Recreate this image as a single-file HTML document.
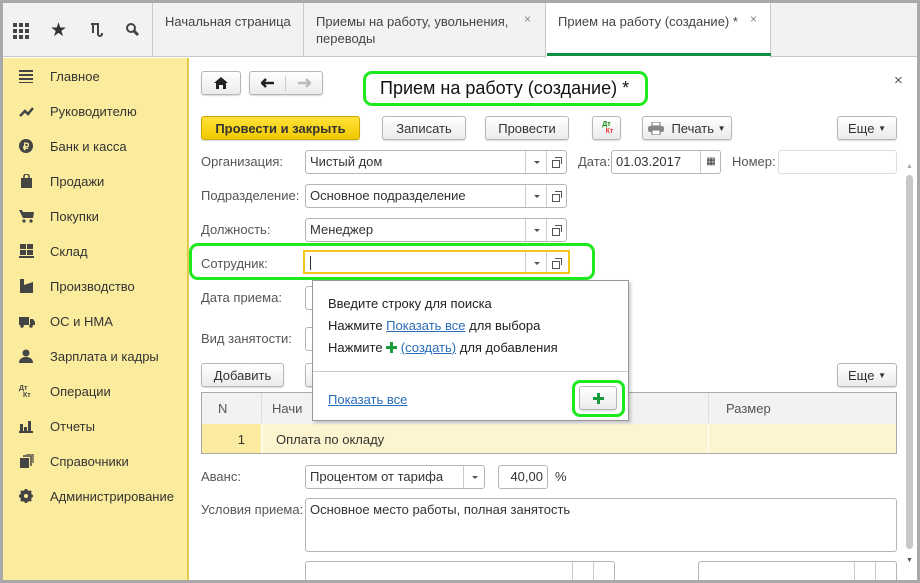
<!DOCTYPE html>
<html><head><meta charset="utf-8"><style>
*{box-sizing:border-box;margin:0;padding:0}
body{width:920px;height:583px;overflow:hidden;background:#a9a9a9;font-family:"Liberation Sans",sans-serif;font-size:13px;color:#333;position:relative}
.a{position:absolute}
.frame{left:3px;top:3px;width:914px;height:577px;background:#fff;overflow:hidden}
.top{left:0;top:0;width:914px;height:54px;background:#f2f2f2;border-bottom:1px solid #c8c8c8}
.tab{top:0;height:54px;border-left:1px solid #c8c8c8;padding:10px 12px;font-size:13px;color:#444;line-height:17px}
.side{left:0;top:55px;width:186px;height:522px;background:#fbec9d;border-right:2px solid #e6c84a}
.mi{left:16px;height:20px;font-size:13px;color:#333;display:flex;align-items:center}
.mi svg{margin-right:15px;flex:none}
.btn{height:24px;border:1px solid #b7b7b7;border-radius:3px;background:linear-gradient(#fff,#ebebeb);font-size:13px;color:#333;display:flex;align-items:center;justify-content:center;box-shadow:0 1px 1px rgba(0,0,0,.15)}
.fld{height:24px;border:1px solid #b5b5b5;border-radius:3px;background:#fff;font-size:13px;color:#333;padding:3px 4px;overflow:hidden}
.lbl{font-size:13px;color:#555}
.dd{position:absolute;top:0;width:21px;height:22px;border-left:1px solid #ccc}
.dd:after{content:"";position:absolute;left:8px;top:10px;border:3px solid transparent;border-top:3px solid #555}
.ob{position:absolute;top:0;width:21px;height:22px;border-left:1px solid #ccc}
.ob:before{content:"";position:absolute;left:5px;top:9px;width:6px;height:6px;border:1px solid #555;background:#fff}
.ob:after{content:"";position:absolute;left:8px;top:6px;width:6px;height:6px;border:1px solid #555;border-left:none;border-bottom:none}
.lnk{color:#2a6dbb;text-decoration:underline}
</style></head><body>
<div class="a frame">
 <div class="a top">
  <svg class="a" style="left:10px;top:20px" width="16" height="16" fill="#444"><rect x="0" y="0" width="4" height="4"/><rect x="6" y="0" width="4" height="4"/><rect x="12" y="0" width="4" height="4"/><rect x="0" y="6" width="4" height="4"/><rect x="6" y="6" width="4" height="4"/><rect x="12" y="6" width="4" height="4"/><rect x="0" y="12" width="4" height="4"/><rect x="6" y="12" width="4" height="4"/><rect x="12" y="12" width="4" height="4"/></svg>
  <div class="a" style="left:47px;top:16px;font-size:19px;color:#333">★</div>
  <svg class="a" style="left:86px;top:19px" width="16" height="16" fill="none" stroke="#444" stroke-width="2"><path d="M2 2h7v10a2 2 0 0 0 4 0v-1"/><path d="M4 2v9"/></svg>
  <svg class="a" style="left:122px;top:19px" width="16" height="16"><circle cx="6" cy="6" r="4" stroke="#444" stroke-width="2" fill="none"/><path d="M9 9l4 4" stroke="#444" stroke-width="3"/></svg>
  <div class="a tab" style="left:149px;width:151px">Начальная страница</div>
  <div class="a tab" style="left:300px;width:242px">Приемы на работу, увольнения,<br>переводы<span class="a" style="left:220px;top:8px;color:#888;font-size:12px">×</span></div>
  <div class="a tab" style="left:542px;width:226px;background:#fff;height:55px;border-right:1px solid #c8c8c8">Прием на работу (создание) *<span class="a" style="left:204px;top:8px;color:#888;font-size:12px">×</span><div class="a" style="left:1px;top:50px;width:224px;height:3px;background:#0f8f3f"></div></div>
 </div>
 <div class="a side">
  <div class="a mi" style="top:8px"><svg width="16" height="14" fill="#444"><rect y="1" width="14" height="2"/><rect y="5" width="14" height="2"/><rect y="9" width="14" height="2"/><rect y="13" width="14" height="1.5"/></svg>Главное</div>
  <div class="a mi" style="top:43px"><svg width="16" height="14" fill="none" stroke="#444" stroke-width="2.5"><path d="M1 12l5-5 3 3 5-6"/></svg>Руководителю</div>
  <div class="a mi" style="top:78px"><svg width="16" height="14"><circle cx="7" cy="7" r="7" fill="#444"/><text x="7" y="11" font-size="10" font-weight="bold" fill="#fbec9d" text-anchor="middle" font-family="Liberation Sans">₽</text></svg>Банк и касса</div>
  <div class="a mi" style="top:113px"><svg width="16" height="14" fill="#444"><path d="M2 4h11v10H2z"/><path d="M5 5V2.5a2.5 2.5 0 0 1 5 0V5" stroke="#444" stroke-width="1.5" fill="none"/></svg>Продажи</div>
  <div class="a mi" style="top:148px"><svg width="16" height="14" fill="#444"><path d="M0 1h3l1 2h11l-1 6H4z"/><circle cx="5" cy="12" r="1.6"/><circle cx="12" cy="12" r="1.6"/></svg>Покупки</div>
  <div class="a mi" style="top:183px"><svg width="16" height="14" fill="#444"><rect x="1" y="0" width="6" height="5"/><rect x="8" y="0" width="6" height="5"/><rect x="1" y="6" width="6" height="5"/><rect x="8" y="6" width="6" height="5"/><rect x="0" y="12" width="15" height="2"/></svg>Склад</div>
  <div class="a mi" style="top:218px"><svg width="16" height="14" fill="#444"><path d="M1 0h4v6l9-3v11H1z"/></svg>Производство</div>
  <div class="a mi" style="top:253px"><svg width="16" height="14" fill="#444"><path d="M0 3h10v8H0zM11 5h3l2 3v3h-5z"/><circle cx="3" cy="12" r="1.8"/><circle cx="12" cy="12" r="1.8"/></svg>ОС и НМА</div>
  <div class="a mi" style="top:288px"><svg width="16" height="14" fill="#444"><circle cx="7" cy="4" r="3.5"/><path d="M0 14c0-4 3-6 7-6s7 2 7 6z"/></svg>Зарплата и кадры</div>
  <div class="a mi" style="top:323px"><svg width="16" height="14" fill="#444" font-family="Liberation Sans" font-weight="bold" font-size="7"><text x="0" y="6">Дт</text><text x="4" y="13">Кт</text></svg>Операции</div>
  <div class="a mi" style="top:358px"><svg width="16" height="14" fill="#444"><rect x="1" y="5" width="3" height="8"/><rect x="5" y="8" width="3" height="5"/><rect x="9" y="2" width="3" height="11"/><rect x="0" y="12" width="14" height="2"/></svg>Отчеты</div>
  <div class="a mi" style="top:393px"><svg width="16" height="14" fill="#444"><rect x="1" y="4" width="9" height="10"/><path d="M4 2h8v10" stroke="#444" stroke-width="1.5" fill="none"/><path d="M7 0h7v9" stroke="#444" stroke-width="1.2" fill="none"/></svg>Справочники</div>
  <div class="a mi" style="top:428px"><svg width="16" height="14"><circle cx="7" cy="7" r="4.5" fill="none" stroke="#444" stroke-width="3"/><g stroke="#444" stroke-width="2.5"><path d="M7 0v14M0 7h14M2 2l10 10M12 2L2 12"/></g><circle cx="7" cy="7" r="2" fill="#fbec9d"/></svg>Администрирование</div>
 </div>
 <!-- content -->
 <div class="a btn" style="left:198px;top:68px;width:40px;height:24px"><svg width="14" height="12" fill="#222"><path d="M7 0l7 6h-2v6H9V8H5v4H2V6H0z"/></svg></div>
 <div class="a btn" style="left:246px;top:68px;width:74px;height:24px;justify-content:flex-start"><span style="width:36px;text-align:center;border-right:1px solid #ccc"><svg width="14" height="10"><path d="M1 5h12M5 1L1 5l4 4" stroke="#222" stroke-width="2.5" fill="none"/></svg></span><span style="width:36px;text-align:center"><svg width="14" height="10"><path d="M1 5h12M9 1l4 4-4 4" stroke="#bbb" stroke-width="2.5" fill="none"/></svg></span></div>
 <div class="a" style="left:360px;top:68px;width:285px;height:35px;border:3px solid #1ee81e;border-radius:9px;font-size:18px;color:#111;padding:4px 0 0 14px">Прием на работу (создание) *</div>
 <div class="a" style="left:891px;top:69px;font-size:15px;color:#555">×</div>
 <div class="a btn" style="left:198px;top:113px;width:159px;background:linear-gradient(#ffe23a,#f1c800);border-color:#c9a800;font-weight:bold;color:#333">Провести и закрыть</div>
 <div class="a btn" style="left:379px;top:113px;width:84px">Записать</div>
 <div class="a btn" style="left:482px;top:113px;width:84px">Провести</div>
 <div class="a btn" style="left:589px;top:113px;width:29px;font-size:7px;font-weight:bold;line-height:7px;flex-direction:column"><span style="color:#0a8a0a">Дт</span><span style="color:#e33;margin-left:6px">Кт</span></div>
 <div class="a btn" style="left:639px;top:113px;width:90px"><svg width="16" height="13" style="margin-right:7px"><rect x="4" y="0" width="8" height="4" fill="#fff" stroke="#777"/><rect x="0" y="4" width="16" height="6" rx="2" fill="#888"/><rect x="4" y="8" width="8" height="5" fill="#fff" stroke="#777"/></svg>Печать&nbsp;<span style="font-size:8px">▼</span></div>
 <div class="a btn" style="left:834px;top:113px;width:60px">Еще&nbsp;<span style="font-size:8px">▼</span></div>
 <!-- fields -->
 <div class="a lbl" style="left:198px;top:151px">Организация:</div>
 <div class="a fld" style="left:302px;top:147px;width:262px">Чистый дом<span class="dd" style="left:219px"></span><span class="ob" style="left:240px"></span></div>
 <div class="a lbl" style="left:575px;top:151px">Дата:</div>
 <div class="a fld" style="left:608px;top:147px;width:110px">01.03.2017<span class="a" style="left:88px;top:0;width:21px;height:22px;border-left:1px solid #ccc;font-size:10px;text-align:center;line-height:22px">▦</span></div>
 <div class="a lbl" style="left:729px;top:151px">Номер:</div>
 <div class="a fld" style="left:775px;top:147px;width:119px;border-color:#ddd"></div>
 <div class="a lbl" style="left:198px;top:185px">Подразделение:</div>
 <div class="a fld" style="left:302px;top:181px;width:262px">Основное подразделение<span class="dd" style="left:219px"></span><span class="ob" style="left:240px"></span></div>
 <div class="a lbl" style="left:198px;top:219px">Должность:</div>
 <div class="a fld" style="left:302px;top:215px;width:262px">Менеджер<span class="dd" style="left:219px"></span><span class="ob" style="left:240px"></span></div>
 <div class="a" style="left:186px;top:240px;width:406px;height:37px;border:3px solid #1ee81e;border-radius:9px"></div>
 <div class="a lbl" style="left:198px;top:253px">Сотрудник:</div>
 <div class="a fld" style="left:300px;top:247px;width:267px;border:2px solid #f5c518;border-radius:0"><span class="a" style="left:5px;top:4px;width:1px;height:14px;background:#333"></span><span class="a" style="left:5px;top:20px;width:214px;border-top:1px dotted #e33"></span><span class="dd" style="left:220px;height:20px"></span><span class="ob" style="left:241px;height:20px"></span></div>
 <div class="a lbl" style="left:198px;top:287px">Дата приема:</div>
 <div class="a fld" style="left:302px;top:283px;width:20px"></div>
 <div class="a lbl" style="left:198px;top:328px">Вид занятости:</div>
 <div class="a fld" style="left:302px;top:324px;width:20px"></div>
 <div class="a btn" style="left:198px;top:360px;width:83px">Добавить</div>
 <div class="a btn" style="left:302px;top:360px;width:20px"></div>
 <div class="a btn" style="left:834px;top:360px;width:60px">Еще&nbsp;<span style="font-size:8px">▼</span></div>
 <!-- table -->
 <div class="a" style="left:198px;top:389px;width:696px;height:62px;border:1px solid #aaa;background:#f2f2f2">
  <div class="a" style="left:0;top:0;width:60px;height:30px;border-right:1px solid #ddd;padding:8px 0 0 16px;color:#555">N</div>
  <div class="a" style="left:70px;top:8px;color:#555">Начи</div>
  <div class="a" style="left:506px;top:0;height:30px;border-left:1px solid #ddd;padding:8px 0 0 17px;color:#555">Размер</div>
  <div class="a" style="left:0;top:31px;width:694px;height:29px;background:#fcf5cf"></div>
  <div class="a" style="left:0;top:31px;width:60px;height:29px;background:#fbeba0;border-right:1px solid #fff;text-align:right;padding:8px 16px 0 0;color:#333">1</div>
  <div class="a" style="left:74px;top:39px;color:#333">Оплата по окладу</div>
  <div class="a" style="left:506px;top:31px;height:29px;border-left:1px solid #fff"></div>
 </div>
 <!-- popup -->
 <div class="a" style="left:309px;top:277px;width:317px;height:141px;background:#fff;border:1px solid #999;box-shadow:2px 2px 3px rgba(0,0,0,.2)">
  <div class="a" style="left:15px;top:15px;color:#222">Введите строку для поиска</div>
  <div class="a" style="left:15px;top:37px;color:#222">Нажмите <span class="lnk">Показать все</span> для выбора</div>
  <div class="a" style="left:15px;top:59px;color:#222">Нажмите <svg width="11" height="11" style="vertical-align:-1px"><path d="M5.5 0v11M0 5.5h11" stroke="#1a9a3a" stroke-width="3"/></svg> <span class="lnk">(создать)</span> для добавления</div>
  <div class="a" style="left:0;top:90px;width:315px;border-top:1px solid #ccc"></div>
  <div class="a lnk" style="left:15px;top:111px">Показать все</div>
  <div class="a" style="left:259px;top:99px;width:53px;height:37px;border:3px solid #1ee81e;border-radius:8px"></div>
  <div class="a btn" style="left:266px;top:105px;width:38px;height:24px"><svg width="11" height="11"><path d="M5.5 0v11M0 5.5h11" stroke="#1a9a3a" stroke-width="3"/></svg></div>
 </div>
 <!-- bottom -->
 <div class="a lbl" style="left:198px;top:466px">Аванс:</div>
 <div class="a fld" style="left:302px;top:462px;width:180px">Процентом от тарифа<span class="dd" style="left:157px"></span></div>
 <div class="a fld" style="left:495px;top:462px;width:50px;text-align:right">40,00</div>
 <div class="a" style="left:552px;top:466px;color:#333">%</div>
 <div class="a lbl" style="left:198px;top:499px">Условия приема:</div>
 <div class="a fld" style="left:302px;top:495px;width:592px;height:54px">Основное место работы, полная занятость</div>
 <div class="a fld" style="left:302px;top:558px;width:310px"><span class="a" style="left:266px;top:0;height:22px;border-left:1px solid #ccc"></span><span class="a" style="left:287px;top:0;height:22px;border-left:1px solid #ccc"></span></div>
 <div class="a fld" style="left:695px;top:558px;width:199px"><span class="a" style="left:155px;top:0;height:22px;border-left:1px solid #ccc"></span><span class="a" style="left:176px;top:0;height:22px;border-left:1px solid #ccc"></span></div>
 <!-- scrollbar -->
 <div class="a" style="left:903px;top:160px;font-size:7px;color:#aaa">▲</div>
 <div class="a" style="left:903px;top:172px;width:7px;height:374px;background:#c8c8c8;border-radius:4px"></div>
 <div class="a" style="left:903px;top:554px;font-size:7px;color:#555">▼</div>
</div>
</body></html>
